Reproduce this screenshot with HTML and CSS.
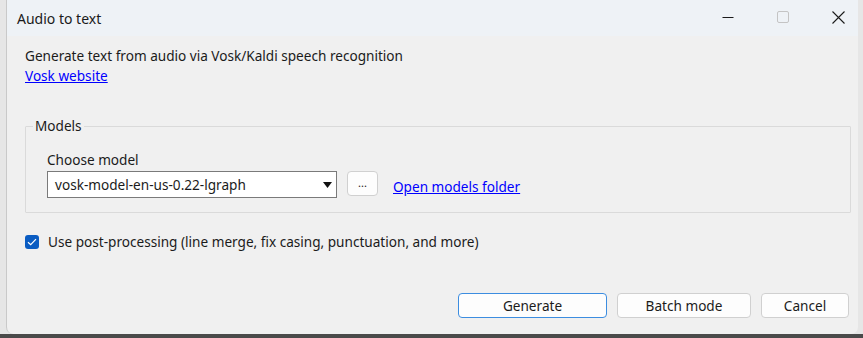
FILE: index.html
```html
<!DOCTYPE html>
<html lang="en">
<head>
  <meta charset="UTF-8" />
  <title>Audio to text</title>
  <link rel="stylesheet" href="styles.css">
</head>
<body>
  <div class="window">
    <div class="titlebar">
      <span class="title">Audio to text</span>
      <div class="caption-btns">
        <span class="cap-btn">
          <svg width="12" height="12" viewBox="0 0 12 12"><path d="M0.5 6.5h11" stroke="#1b1b1b" stroke-width="1"/></svg>
        </span>
        <span class="cap-btn">
          <svg width="12" height="12" viewBox="0 0 12 12"><rect x="0.5" y="0.5" width="11" height="11" rx="1.5" fill="none" stroke="#c4c4c4" stroke-width="1"/></svg>
        </span>
        <span class="cap-btn">
          <svg width="13" height="13" viewBox="0 0 13 13"><path d="M0.5 0.5L12.5 12.5M12.5 0.5L0.5 12.5" stroke="#1b1b1b" stroke-width="1.1"/></svg>
        </span>
      </div>
    </div>

    <div class="content">
      <div class="intro">
        <div>Generate text from audio via Vosk/Kaldi speech recognition</div>
        <a href="#" class="link">Vosk website</a>
      </div>

      <fieldset class="group">
        <legend>Models</legend>
        <div class="field-label">Choose model</div>
        <div class="model-row">
          <div class="select">
            <span>vosk-model-en-us-0.22-lgraph</span>
            <svg width="9" height="6" viewBox="0 0 9 6"><path d="M0 0h9L4.5 6z" fill="#111"/></svg>
          </div>
          <button class="dots">...</button>
          <a href="#" class="link folder-link">Open models folder</a>
        </div>
      </fieldset>

      <label class="check-row">
        <span class="checkbox">
          <svg width="10" height="8" viewBox="0 0 10 8"><path d="M1 4.2L3.7 6.7L9 1.2" fill="none" stroke="#fff" stroke-width="1.2"/></svg>
        </span>
        Use post-processing (line merge, fix casing, punctuation, and more)
      </label>

      <div class="actions">
        <button class="btn btn-default">Generate</button>
        <button class="btn btn-batch">Batch mode</button>
        <button class="btn btn-cancel">Cancel</button>
      </div>
    </div>
  </div>
</body>
</html>
```

FILE: styles.css
```css
body {
  margin: 0;
  width: 863px;
  height: 338px;
  overflow: hidden;
  background: linear-gradient(to bottom, #e6e6e6 0, #e6e6e6 334px, #4a4a4a 334px);
  font-family: "Noto Sans", "Open Sans", sans-serif;
  font-size: 13.6px;
  color: #1b1b1b;
}

.window {
  margin-left: 6px;
  width: 852px;
  height: 334px;
  background: #f0f0f0;
  border-left: 1px solid #c9c9c9;
  border-radius: 0 0 7px 7px;
  box-sizing: border-box;
  display: flex;
  flex-direction: column;
}

.titlebar {
  height: 36px;
  background: #eef2f6;
  display: flex;
  align-items: center;
  justify-content: space-between;
  padding-left: 10px;
}

.title {
  font-size: 14px;
  color: #1a1a1a;
}

.caption-btns {
  display: flex;
  height: 100%;
  gap: 31px;
  padding-right: 8px;
}

.cap-btn {
  width: 24px;
  display: flex;
  align-items: center;
  justify-content: center;
  margin-top: -2px;
}

.content {
  flex: 1;
  padding: 10px 7px 0 18px;
  display: flex;
  flex-direction: column;
}

.intro {
  line-height: 20px;
}

.link {
  color: #0000ff;
  text-decoration: underline;
}

.group {
  margin: 32px 0 0 0;
  padding: 18px 0 13px 21px;
  border: 1px solid #dadada;
  border-radius: 1px;
  width: 826px;
  box-sizing: border-box;
  height: 95px;
}

.group legend {
  padding: 0 2px;
  margin-left: -14px;
  line-height: 16px;
}

.field-label {
  line-height: 16px;
  margin-bottom: 3px;
}

.model-row {
  display: flex;
  align-items: flex-start;
}

.select {
  width: 290px;
  height: 27px;
  box-sizing: border-box;
  background: #fff;
  border: 1px solid #7a7a7a;
  display: flex;
  align-items: center;
  justify-content: space-between;
  padding: 0 4px 0 7px;
}

.dots {
  margin-left: 10px;
  width: 31px;
  height: 25px;
  background: #fdfdfd;
  border: 1px solid #d0d0d0;
  border-radius: 4px;
  font-family: inherit;
  font-size: 11px;
  color: #1b1b1b;
  padding: 0 0 2px 0;
}

.folder-link {
  margin-left: 15px;
  margin-top: 6px;
}

.check-row {
  margin-top: 20px;
  display: flex;
  align-items: center;
  gap: 9px;
  line-height: 18px;
}

.checkbox {
  width: 14px;
  height: 14px;
  background: #0a5cc2;
  border-radius: 3px;
  display: flex;
  align-items: center;
  justify-content: center;
}

.actions {
  margin-top: auto;
  margin-bottom: 16px;
  display: flex;
  justify-content: flex-end;
  gap: 10px;
  padding-right: 2px;
}

.btn {
  height: 25px;
  background: #fdfdfd;
  border: 1px solid #d0d0d0;
  border-radius: 4px;
  font-family: inherit;
  font-size: 13.6px;
  color: #1b1b1b;
  padding: 0;
}

.btn-default {
  width: 149px;
  border: 1px solid #3c8de0;
}

.btn-batch {
  width: 134px;
}

.btn-cancel {
  width: 88px;
}
```
